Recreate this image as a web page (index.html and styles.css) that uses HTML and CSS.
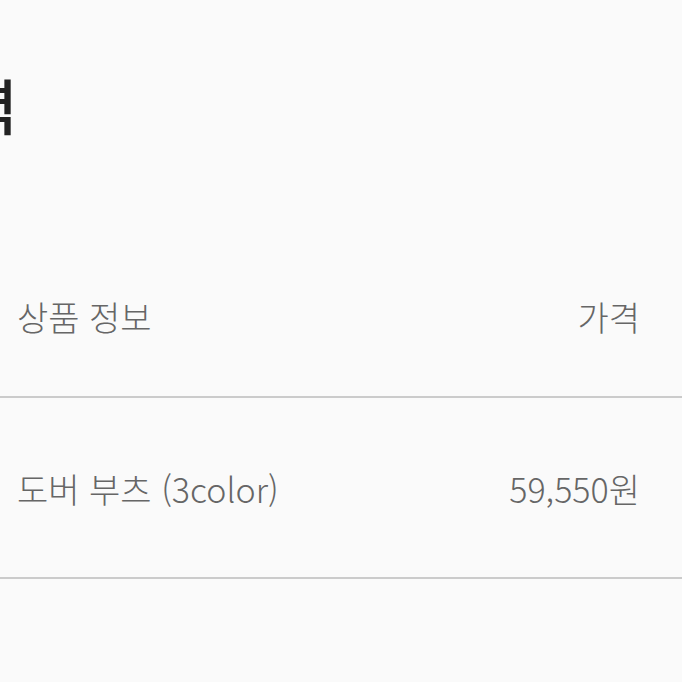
FILE: index.html
```html
<!DOCTYPE html>
<html lang="ko">
<head>
<meta charset="UTF-8" />
<title>구매 이력</title>
<meta name="viewport" content="width=device-width, initial-scale=1" />
<link rel="stylesheet" href="styles.css">
</head>
<body>
<main class="page">
  <h1 class="page-title">구매 이력</h1>

  <section class="order-table">
    <div class="order-row order-head">
      <span class="col-name">상품 정보</span>
      <span class="col-price">가격</span>
    </div>
    <div class="order-row order-item">
      <span class="col-name">도버 부츠 (3color)</span>
      <span class="col-price">59,550원</span>
    </div>
  </section>
</main>
</body>
</html>
```

FILE: styles.css
```css
:root {
  --bg:#fafafa;
  --text:#222;
  --muted:#666;
  --line:#cbcbcb;
  --sans:"Noto Sans CJK KR","Noto Sans",sans-serif;
}

body { margin:0; background:var(--bg); font-family:var(--sans); color:var(--text); }
.page { overflow:hidden; min-height:682px; }

/* title is scrolled off to the left, only the tail of the last glyph shows */
.page-title { margin:0 0 0 -220px; padding-top:64px; height:174px; box-sizing:border-box; font-size:60px; font-weight:500; line-height:80px; white-space:nowrap; }

.order-row { display:flex; justify-content:space-between; align-items:center; padding:0 42px 0 17px; border-bottom:2px solid var(--line); font-size:34px; font-weight:300; color:var(--muted); box-sizing:border-box; }
.order-head { height:224px; padding-top:62px; }
.order-item { height:181px; padding-top:2px; }
```
